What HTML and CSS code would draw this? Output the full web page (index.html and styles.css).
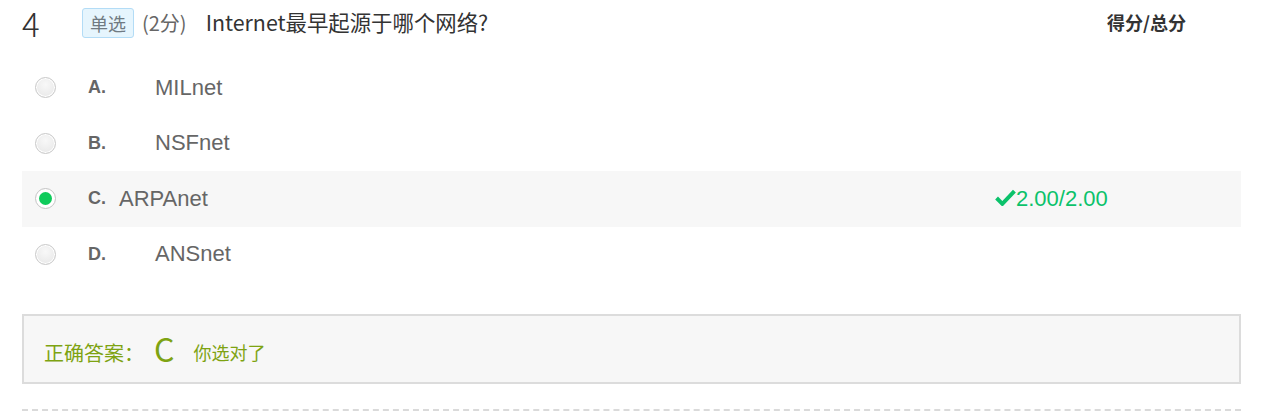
FILE: index.html
```html
<!DOCTYPE html>
<html lang="zh-CN">
<head>
<meta charset="utf-8">
<title>Question 4</title>
<link rel="stylesheet" href="styles.css">
</head>
<body>
<div class="question">
  <div class="q-head">
    <span class="q-num">4</span>
    <span class="q-tag">单选</span>
    <span class="q-score">(2分)</span>
    <span class="q-title">Internet最早起源于哪个网络?</span>
    <span class="q-total">得分/总分</span>
  </div>
  <ul class="options">
    <li class="option">
      <span class="radio"></span>
      <span class="opt-letter">A.</span>
      <span class="opt-text indent">MILnet</span>
    </li>
    <li class="option">
      <span class="radio"></span>
      <span class="opt-letter">B.</span>
      <span class="opt-text indent">NSFnet</span>
    </li>
    <li class="option selected">
      <span class="radio checked"></span>
      <span class="opt-letter">C.</span>
      <span class="opt-text">ARPAnet</span>
      <span class="opt-result">
        <svg class="check" viewBox="0 0 20 16" width="21" height="17"><path d="M1.5 8.5 L7 14 L18.5 2" fill="none" stroke="currentColor" stroke-width="3.8" stroke-linejoin="miter"/></svg>2.00/2.00
      </span>
    </li>
    <li class="option">
      <span class="radio"></span>
      <span class="opt-letter">D.</span>
      <span class="opt-text indent">ANSnet</span>
    </li>
  </ul>
  <div class="answer">
    <span class="ans-label">正确答案：</span>
    <span class="ans-key">C</span>
    <span class="ans-note">你选对了</span>
  </div>
  <div class="divider"></div>
</div>
</body>
</html>
```

FILE: styles.css
```css
* { box-sizing: border-box; }
body {
  margin: 0;
  background: #fff;
  font-family: "Liberation Sans", "Noto Sans CJK SC", sans-serif;
  color: #333;
}
.question {
  width: 1219px;
  margin-left: 22px;
}
.q-head {
  height: 60px;
  display: flex;
  align-items: flex-start;
  padding-top: 6px;
}
.q-num {
  font-family: "Noto Sans CJK SC", "Liberation Sans", sans-serif;
  font-weight: 300;
  font-size: 33px;
  line-height: 38px;
  margin-top: -2px;
  color: #333;
  width: 60px;
}
.q-tag {
  margin-top: 2px;
  height: 30px;
  padding: 0 7px;
  font-family: "Noto Sans CJK SC", sans-serif;
  font-size: 18px;
  line-height: 28px;
  color: #707a82;
  background: #e6f5fd;
  border: 1px solid #b3dcf6;
  border-radius: 3px;
}
.q-score {
  margin-left: 8px;
  font-family: "Noto Sans CJK SC", sans-serif;
  font-size: 20px;
  line-height: 34px;
  color: #666;
}
.q-title {
  margin-left: 19px;
  font-family: "Noto Sans CJK SC", sans-serif;
  font-size: 21.4px;
  line-height: 32px;
  color: #333;
}
.q-total {
  margin-left: auto;
  margin-right: 55px;
  margin-top: 3px;
  font-family: "Noto Sans CJK SC", sans-serif;
  font-weight: bold;
  font-size: 18px;
  line-height: 26px;
  color: #333;
}
.options {
  list-style: none;
  margin: 0;
  padding: 0;
}
.option {
  height: 55.5px;
  display: flex;
  align-items: center;
  padding-left: 13px;
}
.option.selected { background: #f7f7f7; }
.radio {
  width: 21px;
  height: 21px;
  border-radius: 50%;
  border: 1px solid #c9c9c9;
  background: radial-gradient(circle at 50% 35%, #f8f8f8 0%, #ebebeb 70%, #dcdcdc 100%);
  box-shadow: inset 0 0 0 1px #fff;
  flex: none;
  position: relative;
}
.radio.checked {
  background: #fff;
  border-color: #c4c4c4;
}
.radio.checked::after {
  content: "";
  position: absolute;
  left: 3px;
  top: 3px;
  width: 13px;
  height: 13px;
  border-radius: 50%;
  background: #0fcb5b;
}
.opt-letter {
  margin-left: 32px;
  font-weight: bold;
  font-size: 18px;
  color: #666;
  width: 31px;
}
.opt-text {
  font-size: 22px;
  color: #666;
  flex: 1;
}
.opt-text.indent { padding-left: 36px; }
.opt-result {
  width: 246px;
  font-size: 22px;
  color: #0bc26b;
  display: flex;
  align-items: center;
}
.check { margin-right: 0; margin-top: -2px; }
.answer {
  margin-top: 32px;
  height: 70px;
  border: 2px solid #dcdcdc;
  background: #f7f7f7;
  display: flex;
  align-items: center;
  padding-left: 20px;
  padding-top: 6px;
  color: #7ea312;
  font-family: "Noto Sans CJK SC", sans-serif;
}
.ans-label { font-size: 20px; }
.ans-key {
  font-size: 32px;
  margin-left: 10px;
  line-height: 36px;
  margin-top: -8px;
}
.ans-note {
  font-size: 18px;
  margin-left: 19px;
}
.divider {
  margin-top: 25px;
  border-top: 2px dashed #dadada;
}
```
